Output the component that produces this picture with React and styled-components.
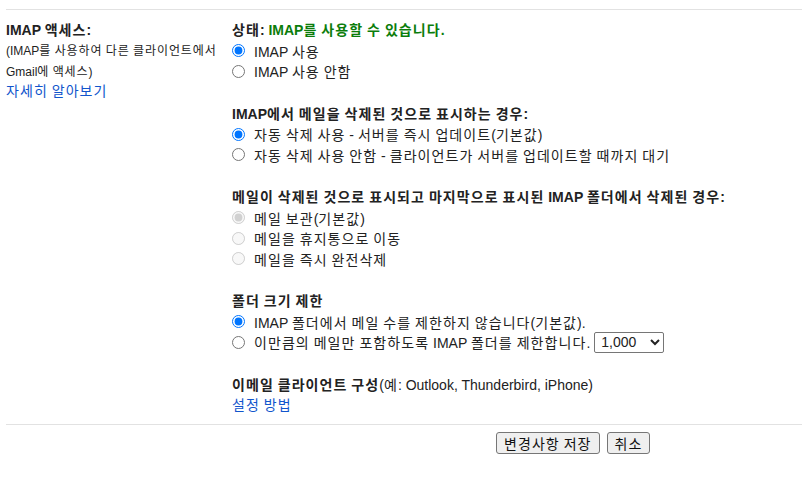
import React from "react";
import styled, { createGlobalStyle } from "styled-components";

const Global = createGlobalStyle`
  html, body { margin: 0; padding: 0; background: #fff; }
  body {
    font-family: "Liberation Sans", Arial, "Noto Sans CJK KR", sans-serif;
    font-size: 14px;
    color: #222;
  }
`;

/* Hangul in the reference font is a little wider than in Noto Sans CJK KR */
const Hangul = styled.span`
  letter-spacing: 0.076em;
`;

function T({ children }) {
  const parts = String(children).split(/([\uAC00-\uD7A3\u3131-\u318E]+)/);
  return parts.map((part, i) =>
    /[\uAC00-\uD7A3]/.test(part) ? <Hangul key={i}>{part}</Hangul> : part
  );
}

const Page = styled.div`
  padding: 9px 0 0 6px;
  width: 796px;
`;

const Rule = styled.div`
  height: 0;
  border-top: 1px solid #e2e2e2;
`;

const SettingRow = styled.div`
  display: grid;
  grid-template-columns: 226px 1fr;
  padding: 10px 0 8px;
`;

const LabelCell = styled.div`
  display: flex;
  flex-direction: column;
`;

const CellTitle = styled.div`
  font-weight: bold;
  line-height: 20.5px;
`;

const Hint = styled.div`
  font-size: 12px;
  line-height: 21px;
  white-space: nowrap;
`;

const Link = styled.a`
  color: #1155cc;
  text-decoration: none;
  line-height: ${(p) => (p.$compact ? "17px" : "20.5px")};
  cursor: pointer;
`;

const OptionsCell = styled.div`
  display: flex;
  flex-direction: column;
  gap: 22px;
`;

const Section = styled.div`
  display: flex;
  flex-direction: column;
`;

const SectionTitle = styled.div`
  font-weight: ${(p) => (p.$light ? "normal" : "bold")};
  line-height: 20.5px;
  white-space: nowrap;
`;

const Strong = styled.span`
  font-weight: bold;
`;

const Status = styled.span`
  color: #0b7d0b;
`;

const RadioRow = styled.label`
  display: flex;
  align-items: center;
  gap: 9px;
  height: 20.5px;
  white-space: nowrap;
  color: #222;
`;

const LabelText = styled.span`
  display: inline-flex;
  align-items: center;
  white-space: pre;
`;

const Radio = styled.input.attrs({ type: "radio" })`
  margin: 0;
  width: 13px;
  height: 13px;
  flex: none;
`;

const Select = styled.select`
  margin-left: 4px;
  height: 21px;
  width: 70px;
  font-family: "Liberation Sans", Arial, sans-serif;
  font-size: 14px;
  color: #222;
  border: 1px solid #767676;
  border-radius: 2px;
  background: #fff;
  padding: 0 2px;
`;

const Actions = styled.div`
  display: flex;
  gap: 7px;
  padding: 7px 0 0 490px;
`;

const Button = styled.button`
  height: 22px;
  padding: 0 7px;
  font-family: "Liberation Sans", Arial, "Noto Sans CJK KR", sans-serif;
  font-size: 14px;
  color: #111;
  background: #efefef;
  border: 1px solid #767676;
  border-radius: 3px;
`;

function Option({ name, checked, disabled, text, children }) {
  return (
    <RadioRow>
      <Radio name={name} defaultChecked={checked} disabled={disabled} />
      <LabelText>
        <span><T>{text}</T></span>
        {children}
      </LabelText>
    </RadioRow>
  );
}

export default function App() {
  return (
    <>
      <Global />
      <Page>
        <Rule />
        <SettingRow>
          <LabelCell>
            <CellTitle><T>IMAP 액세스:</T></CellTitle>
            <Hint>
              <T>(IMAP를 사용하여 다른 클라이언트에서</T>
              <br />
              <T>Gmail에 액세스)</T>
            </Hint>
            <Link $compact><T>자세히 알아보기</T></Link>
          </LabelCell>
          <OptionsCell>
            <Section>
              <SectionTitle>
                <T>상태: </T>
                <Status><T>IMAP를 사용할 수 있습니다.</T></Status>
              </SectionTitle>
              <Option name="imap" checked text="IMAP 사용" />
              <Option name="imap" text="IMAP 사용 안함" />
            </Section>
            <Section>
              <SectionTitle><T>IMAP에서 메일을 삭제된 것으로 표시하는 경우:</T></SectionTitle>
              <Option name="expunge" checked text="자동 삭제 사용 - 서버를 즉시 업데이트(기본값)" />
              <Option
                name="expunge"
                text="자동 삭제 사용 안함 - 클라이언트가 서버를 업데이트할 때까지 대기"
              />
            </Section>
            <Section>
              <SectionTitle>
                <T>메일이 삭제된 것으로 표시되고 마지막으로 표시된 IMAP 폴더에서 삭제된 경우:</T>
              </SectionTitle>
              <Option name="deleted" checked disabled text="메일 보관(기본값)" />
              <Option name="deleted" disabled text="메일을 휴지통으로 이동" />
              <Option name="deleted" disabled text="메일을 즉시 완전삭제" />
            </Section>
            <Section>
              <SectionTitle><T>폴더 크기 제한</T></SectionTitle>
              <Option name="limit" checked text="IMAP 폴더에서 메일 수를 제한하지 않습니다(기본값)." />
              <Option name="limit" text="이만큼의 메일만 포함하도록 IMAP 폴더를 제한합니다.">
                <Select defaultValue="1000">
                  <option value="1000">1,000</option>
                  <option value="2000">2,000</option>
                  <option value="5000">5,000</option>
                  <option value="10000">10,000</option>
                </Select>
              </Option>
            </Section>
            <Section>
              <SectionTitle $light>
                <Strong><T>이메일 클라이언트 구성</T></Strong>
                <T>(예: Outlook, Thunderbird, iPhone)</T>
              </SectionTitle>
              <Link><T>설정 방법</T></Link>
            </Section>
          </OptionsCell>
        </SettingRow>
        <Rule />
        <Actions>
          <Button><T>변경사항 저장</T></Button>
          <Button><T>취소</T></Button>
        </Actions>
      </Page>
    </>
  );
}
